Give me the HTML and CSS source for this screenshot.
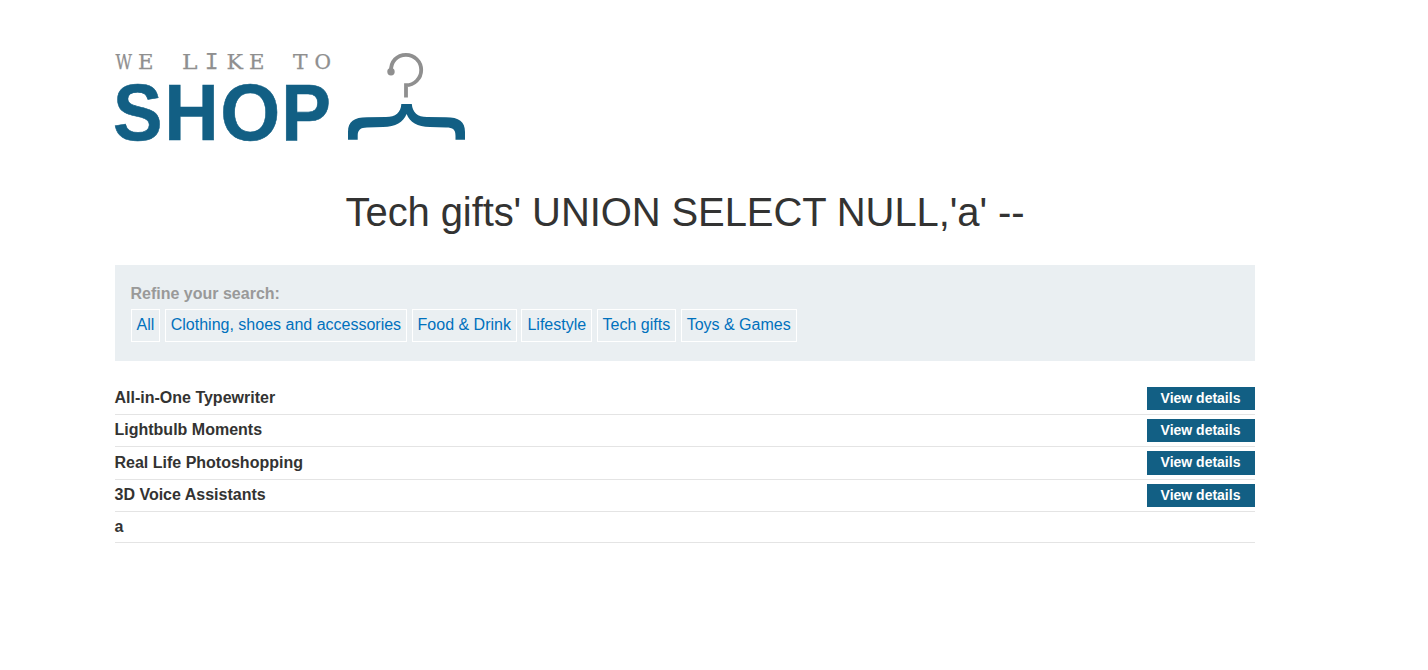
FILE: index.html
```html
<!DOCTYPE html>
<html lang="en">
<head>
<meta charset="utf-8">
<title>We like to shop</title>
<link rel="stylesheet" href="styles.css">
</head>
<body>
<main class="container">
  <svg class="logo" viewBox="115 40 360 110" role="img" aria-label="We like to shop">
    <g class="logo-tagline">
      <text x="115.5" y="69" textLength="16.5" lengthAdjust="spacingAndGlyphs">W</text>
      <text x="138" y="69" textLength="15.500" lengthAdjust="spacingAndGlyphs">E</text>
      <text x="182" y="69" textLength="15.500" lengthAdjust="spacingAndGlyphs">L</text>
      <text class="logo-mono" x="204.800" y="69">I</text>
      <text x="226.500" y="69" textLength="16.5" lengthAdjust="spacingAndGlyphs">K</text>
      <text x="249" y="69" textLength="15.500" lengthAdjust="spacingAndGlyphs">E</text>
      <text x="293" y="69" textLength="14.5" lengthAdjust="spacingAndGlyphs">T</text>
      <text x="314.5" y="69" textLength="16.5" lengthAdjust="spacingAndGlyphs">O</text>
    </g>
    <g class="logo-name">
      <text x="113" y="139.500" textLength="49.500" lengthAdjust="spacingAndGlyphs">S</text>
      <text x="164.300" y="139.500" textLength="54.500" lengthAdjust="spacingAndGlyphs">H</text>
      <text x="220.200" y="139.500" textLength="60" lengthAdjust="spacingAndGlyphs">O</text>
      <text x="281.300" y="139.500" textLength="49.700" lengthAdjust="spacingAndGlyphs">P</text>
    </g>
    <circle cx="391" cy="71.7" r="3.7" fill="#8f8f8f"/>
    <path d="M391 71.5C390.5 61.500 397 54.800 406 54.800A15.200 15.200 0 0 1 406 85.200V97.500" fill="none" stroke="#8f8f8f" stroke-width="3.800"/>
    <path d="M401.300 104H411.800C412.500 112.500 417.500 117 427 117L446 117.300C459 117.300 465 121.500 465 132V139.700H455.500V136C455.500 129.500 453 127.700 446 127.600L430 127C417 126.500 410 122.500 406.600 114C403 122.500 396 126.500 383 127L367 127.600C360.500 127.700 357.700 130 357.700 136V139.700H348V132C348 121.500 354 117.300 367 117.300L386 117C395.500 117 401 112.500 401.300 104Z" fill="#125f84"/>
  </svg>
  <h1 class="title">Tech gifts' UNION SELECT NULL,'a' --</h1>
  <section class="filters">
    <span class="filters-label">Refine your search:</span>
    <nav class="filters-list">
      <a class="filter">All</a>
      <a class="filter">Clothing, shoes and accessories</a>
      <a class="filter">Food &amp; Drink</a>
      <a class="filter">Lifestyle</a>
      <a class="filter">Tech gifts</a>
      <a class="filter">Toys &amp; Games</a>
    </nav>
  </section>
  <section class="products">
    <div class="product"><span class="product-name">All-in-One Typewriter</span><a class="button">View details</a></div>
    <div class="product"><span class="product-name">Lightbulb Moments</span><a class="button">View details</a></div>
    <div class="product"><span class="product-name">Real Life Photoshopping</span><a class="button">View details</a></div>
    <div class="product"><span class="product-name">3D Voice Assistants</span><a class="button">View details</a></div>
    <div class="product product-last"><span class="product-name">a</span></div>
  </section>
</main>
</body>
</html>
```
FILE: styles.css
```css
* { box-sizing: border-box; }
body {
  margin: 0;
  background: #fff;
  color: #333332;
  font: 16px/20px "Liberation Sans", Arial, sans-serif;
}
.container { width: 1140px; margin-left: 115px; padding-top: 40px; }
.logo { display: block; width: 360px; height: 110px; overflow: visible; }
.logo-tagline {
  font: 21px "DejaVu Serif Condensed", "DejaVu Serif", serif;
  fill: #8f8f8f;
  stroke: #8f8f8f;
  stroke-width: 0.250px;
}
.logo-mono { font: 23px "Liberation Mono", monospace; }
.logo-name {
  font: bold 80.5px "Liberation Sans", Arial, sans-serif;
  fill: #125f84;
  stroke: #125f84;
  stroke-width: 0.600px;
}
.title {
  margin: 38px 0 29px;
  font-size: 40px;
  line-height: 48px;
  font-weight: 400;
  letter-spacing: -0.1px;
  text-align: center;
}
.filters { height: 96px; padding: 18px 15px; background: #eaeff2; }
.filters-label { display: block; margin-left: 0.500px; color: #999; font-weight: 700; line-height: 22px; }
.filters-list { display: flex; gap: 4.480px; margin-top: 4px; margin-left: 0.5px; }
.filter {
  height: 33px;
  padding: 0 5px;
  border: 1px solid #fff;
  color: #0071bd;
  line-height: 30px;
}
.products { padding-top: 22px; font-weight: 700; }
.product {
  display: flex;
  justify-content: space-between;
  height: 32.2px;
  padding-top: 4px;
  border-bottom: 1px solid #e4e4e4;
}
.product-last { height: 31.200px; }
.product-name { margin-left: -0.5px; padding-top: 0.200px; line-height: 22px; }
.button {
  width: 108px;
  height: 23.200px;
  padding-right: 1px;
  background: #125f84;
  color: #fff;
  font-size: 14px;
  line-height: 23px;
  text-align: center;
}
```
